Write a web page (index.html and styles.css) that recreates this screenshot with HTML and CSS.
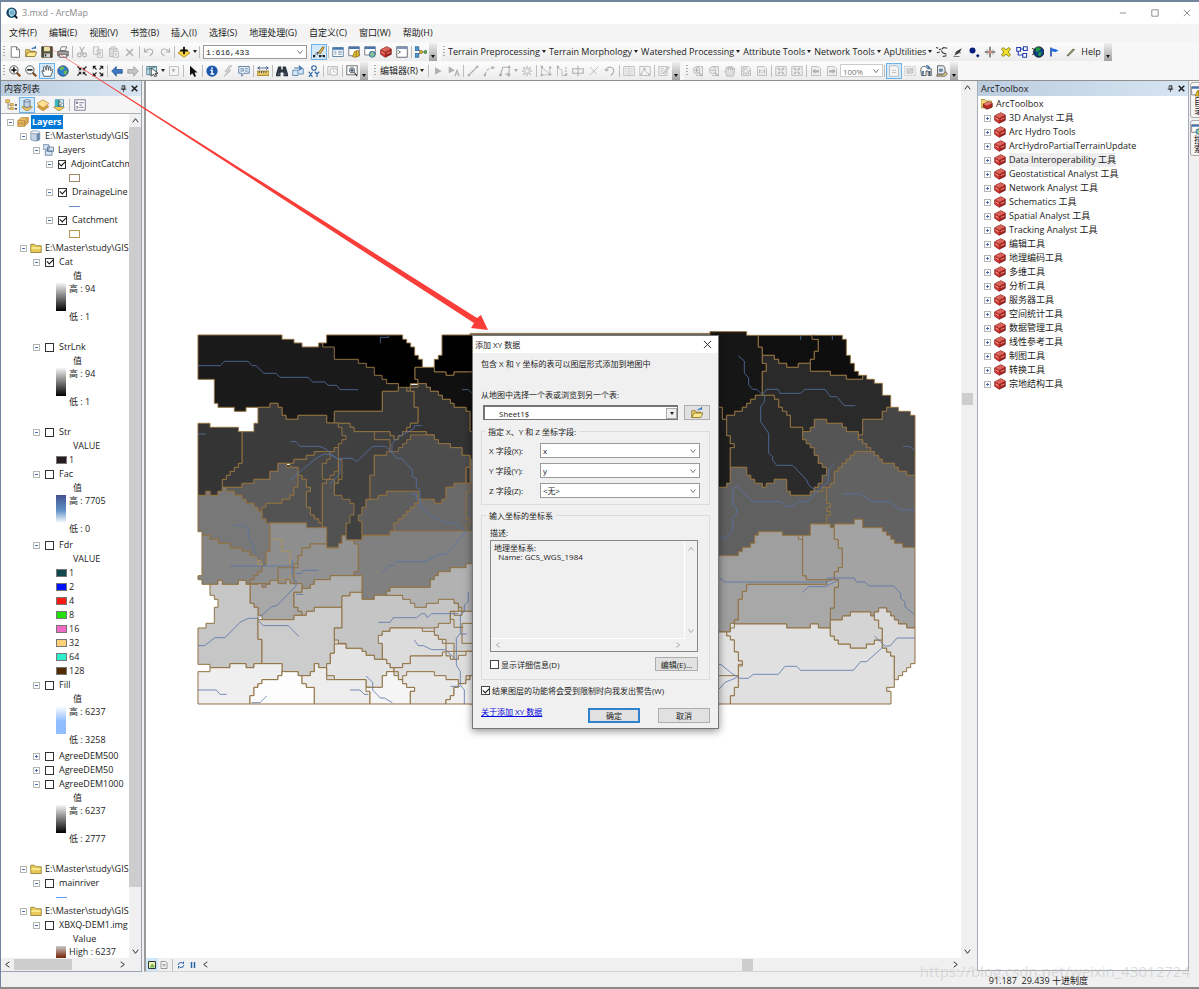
FILE: index.html
```html
<!DOCTYPE html>
<html lang="zh-CN">
<head>
<meta charset="utf-8">
<title>3.mxd - ArcMap</title>
<link rel="stylesheet" href="styles.css">
</head>
<body>
<svg class="defs" aria-hidden="true">
  <defs>
    <symbol id="app" viewBox="0 0 16 16"><circle cx="7.500" cy="7.500" r="7" fill="#173f63"/><path d="M3 4q4-4 8 0l-2 3-4-1zM4 9l4 1 1 4-3-1z" fill="#49b6b4"/><circle cx="8" cy="7.500" r="4" fill="#6fb0d2" stroke="#e4f2f8"/><path d="M11 11l4 4" stroke="#123" stroke-width="2.500"/></symbol>
    <symbol id="new" viewBox="0 0 16 16"><path d="M3 1h7l4 4v10H3z" fill="#fff" stroke="#555"/><path d="M10 1v4h4" fill="none" stroke="#555"/></symbol>
    <symbol id="open" viewBox="0 0 16 16"><path d="M1 14V5h5l1 2h6v2" fill="#f7d774" stroke="#7a6014"/><path d="M1 14l3-6h12l-3 6z" fill="#ffe892" stroke="#7a6014"/><path d="M9 4q3-3 5-1M14 0v3h-3" fill="none" stroke="#3876b8" stroke-width="1.500"/></symbol>
    <symbol id="save" viewBox="0 0 16 16"><path d="M1 1h14v14H1z" fill="#54513c" stroke="#2e2c20"/><path d="M4 1h8v6H4z" fill="#e9dfa7"/><path d="M4 10h8v5H4z" fill="#d6d6d6"/><path d="M5 11h2v3H5z" fill="#333"/></symbol>
    <symbol id="print" viewBox="0 0 16 16"><path d="M4 6l2-5h7l-2 5z" fill="#fff" stroke="#555"/><path d="M1 7h14v6H1z" fill="#a6a6a6" stroke="#444"/><path d="M3 11h10v4H3z" fill="#eee" stroke="#444"/></symbol>
    <symbol id="cut" viewBox="0 0 16 16"><path d="M5 1l5 10M11 1L6 10" fill="none" stroke="currentColor" stroke-width="1.500"/><circle cx="4.500" cy="12" r="2.500" fill="none" stroke="currentColor" stroke-width="1.500"/><circle cx="11.500" cy="12" r="2.500" fill="none" stroke="currentColor" stroke-width="1.500"/></symbol>
    <symbol id="copy" viewBox="0 0 16 16"><path d="M2 1h7v10H2zM7 5h7v10H7z" fill="#f2f2f2" stroke="currentColor"/><path d="M9 8h3M9 10h3M9 12h3" stroke="currentColor"/></symbol>
    <symbol id="paste" viewBox="0 0 16 16"><path d="M2 3h10v11H2z" fill="#ddd" stroke="currentColor"/><path d="M5 1h4v3H5zM7 7h7v8H7z" fill="#f4f4f4" stroke="currentColor"/><path d="M9 10h3M9 12h3" stroke="currentColor"/></symbol>
    <symbol id="cross" viewBox="0 0 16 16"><path d="M3 4l9 9M12 4l-9 9" fill="none" stroke="currentColor" stroke-width="2"/></symbol>
    <symbol id="undo" viewBox="0 0 16 16"><path d="M2 3v5h5M2 8q5-6 10-3 3 4-3 8" fill="none" stroke="currentColor" stroke-width="1.500"/></symbol>
    <symbol id="redo" viewBox="0 0 16 16"><path d="M14 3v5H9M14 8Q9 2 4 5q-3 4 3 8" fill="none" stroke="currentColor" stroke-width="1.500"/></symbol>
    <symbol id="add" viewBox="0 0 16 16"><path d="M0 9l8-5 8 5-8 6z" fill="#ffd83d" stroke="#a37e16"/><path d="M8 1v10M3 6h10" stroke="#111" stroke-width="2.500"/></symbol>
    <symbol id="editor" viewBox="0 0 16 16"><path d="M1 13l3-3 5 3h6" fill="none" stroke="#333" stroke-dasharray="2 1"/><path d="M0 12h3v3H0zM5 8h2v2H5zM8 12h3v3H8zM13 12h3v3h-3z" fill="#222"/><path d="M7 9l6-8 2 1-5 8z" fill="#e8bc49" stroke="#674d13"/></symbol>
    <symbol id="table" viewBox="0 0 16 16"><path d="M1 2h14v12H1z" fill="#fff" stroke="#41658c"/><path d="M1 2h14v3H1z" fill="#4476ad"/><path d="M3 7h3M3 9h3M3 11h3M8 7h5M8 9h5M8 11h5" stroke="#6a8fb6"/></symbol>
    <symbol id="catalog" viewBox="0 0 16 16"><path d="M1 1h14v12H1z" fill="#fff" stroke="#556"/><path d="M1 1h14v3H1z" fill="#4476ad"/><path d="M9 7l5-1 1 7-5 2-4-1z" fill="#e3c02c" stroke="#816915"/><path d="M11 7v7" stroke="#816915"/></symbol>
    <symbol id="search" viewBox="0 0 16 16"><path d="M1 1h14v11H1z" fill="#fff" stroke="#556"/><path d="M1 1h14v3H1z" fill="#4476ad"/><circle cx="11" cy="11" r="4" fill="#67a9d8" stroke="#2c6577"/><path d="M8 11h6M11 8v6" stroke="#9bd065" stroke-width="1.500"/></symbol>
    <symbol id="toolbox" viewBox="0 0 16 16"><path d="M1 5l8-4 6 3v7l-8 4-6-4z" fill="#a8241f" stroke="#63110e"/><path d="M1 5l8-4 6 3-8 4z" fill="#d8645c"/><path d="M1 6l6 3v6l-6-4z" fill="#ce3c35"/><path d="M2 8l4 2M9 10l5-2" stroke="#f1c0b8"/></symbol>
    <symbol id="toolroot" viewBox="0 0 16 16"><path d="M0 13V2h5l2 2h7v9z" fill="#f7d671" stroke="#967923"/><path d="M3 8l7-3 5 2v5l-7 3-5-3z" fill="#b52d27" stroke="#681713"/><path d="M3 8l7-3 5 2-7 3z" fill="#e37b72"/></symbol>
    <symbol id="python" viewBox="0 0 16 16"><path d="M1 1h14v14H1z" fill="#fff" stroke="#445"/><path d="M1 1h14v3H1z" fill="#7d95b5"/><path d="M3 6l3 2-3 2" fill="none" stroke="#333"/></symbol>
    <symbol id="model" viewBox="0 0 16 16"><path d="M4 4l4 4-4 4M8 8h5" fill="none" stroke="#556"/><path d="M0 1h5v5H0z" fill="#4b9ad2" stroke="#285c87"/><path d="M0 10h5v5H0z" fill="#4b9ad2" stroke="#285c87"/><circle cx="8" cy="8" r="2" fill="#edc34e" stroke="#806115"/><circle cx="14" cy="8" r="2" fill="#67b567" stroke="#296729"/></symbol>
    <symbol id="zin" viewBox="0 0 16 16"><path d="M10 10l5 5" stroke="#7b4a20" stroke-width="3"/><circle cx="6.500" cy="6.500" r="5.500" fill="#f4f8fa" stroke="#333"/><path d="M3 6.500h7M6.500 3v7" stroke="#111" stroke-width="2"/></symbol>
    <symbol id="zout" viewBox="0 0 16 16"><path d="M10 10l5 5" stroke="#7b4a20" stroke-width="3"/><circle cx="6.500" cy="6.500" r="5.500" fill="#f4f8fa" stroke="#333"/><path d="M3 6.500h7" stroke="#111" stroke-width="2"/></symbol>
    <symbol id="hand" viewBox="0 0 16 16"><path d="M4 15L1 8l2-1 1 2-1-6 2-1 2 5V1h2l1 6 1-5 2 1v5l2-2 1 1-3 8z" fill="#fff" stroke="#333"/></symbol>
    <symbol id="globe" viewBox="0 0 16 16"><circle cx="8" cy="8" r="7" fill="#2e7fcb" stroke="#243f64"/><path d="M3 4q5-4 7 0l-3 3-3-1zM9 8l5-1-2 6-3-1z" fill="#75b852"/></symbol>
    <symbol id="darkglobe" viewBox="0 0 16 16"><circle cx="9" cy="8" r="7" fill="#123e89" stroke="#111"/><path d="M5 3q5-3 7 1l-3 3-4 1zM9 8l4 0-2 6-3-2z" fill="#1f9a42"/><path d="M0 3l4 2M0 12l4-3" stroke="#111"/></symbol>
    <symbol id="fixin" viewBox="0 0 16 16"><path d="M2 2l4 4M14 2l-4 4M2 14l4-4M14 14l-4-4" stroke="#222" stroke-width="1.500"/><path d="M7 3v4H3zM9 3v4h4zM7 13V9H3zM9 13V9h4z" fill="#222"/></symbol>
    <symbol id="fixout" viewBox="0 0 16 16"><path d="M2 2l4 4M14 2l-4 4M2 14l4-4M14 14l-4-4" stroke="#222" stroke-width="1.500"/><path d="M1 1h5L1 6zM15 1h-5l5 5zM1 15h5l-5-5zM15 15h-5l5-5z" fill="#222"/></symbol>
    <symbol id="back" viewBox="0 0 16 16"><path d="M1 8l6-6v4h8v5H7v4z" fill="#3c78c6" stroke="#224c89"/></symbol>
    <symbol id="fwd" viewBox="0 0 16 16"><path d="M15 8L9 2v4H1v5h8v4z" fill="#c3c3c3" stroke="#999"/></symbol>
    <symbol id="selfeat" viewBox="0 0 16 16"><path d="M1 2h13v11H1z" fill="#bfe6e4" stroke="#3c6a83"/><path d="M1 6l13-4M5 2v11" stroke="#3c6a83"/><path d="M7 4v11l3-3 2 4 2-1-2-4h4z" fill="#fff" stroke="#222"/></symbol>
    <symbol id="clearsel" viewBox="0 0 16 16"><path d="M2 2h12v12H2z" fill="#f5f5f5" stroke="currentColor"/><path d="M5 5l5 1-3 4z" fill="currentColor"/></symbol>
    <symbol id="pointer" viewBox="0 0 16 16"><path d="M4 1v13l3-3 3 5 2-1-2-5h4z" fill="#111"/></symbol>
    <symbol id="info" viewBox="0 0 16 16"><circle cx="8" cy="8" r="7.500" fill="#1d56a8"/><path d="M8 3v2M6 7h2v5M6 12h5" fill="none" stroke="#fff" stroke-width="2"/></symbol>
    <symbol id="bolt" viewBox="0 0 16 16"><path d="M10 1L4 9h4l-5 6 9-8H8l5-6z" fill="#ddd" stroke="currentColor"/></symbol>
    <symbol id="popup" viewBox="0 0 16 16"><path d="M1 2h14v9H8l-3 4v-4H1z" fill="#e9f3fc" stroke="#396188"/><path d="M3 5h4v3H3M9 5h4M9 8h4" fill="none" stroke="#396188"/></symbol>
    <symbol id="measure" viewBox="0 0 16 16"><path d="M0 8h16v6H0z" fill="#efc95c" stroke="#937322"/><path d="M3 8v3M6 8v3M9 8v3M12 8v3M1 4h14M4 2L1 4l3 2M12 2l3 2-3 2" fill="none" stroke="#21477a"/></symbol>
    <symbol id="find" viewBox="0 0 16 16"><path d="M3 2h4v4h2V2h4l3 10v3h-6v-5H6v5H0v-3z" fill="#2c3540"/><path d="M2 12h3M11 12h3" stroke="#88a"/></symbol>
    <symbol id="route" viewBox="0 0 16 16"><path d="M1 7h7v7H1zM9 5h6v7H9" fill="#d6e8f8" stroke="#3b6fa8"/><path d="M3 4h8M9 1l4 3-4 3" fill="none" stroke="#3b6fa8" stroke-width="1.500"/></symbol>
    <symbol id="xy" viewBox="0 0 16 16"><circle cx="8" cy="4" r="3" fill="#fff" stroke="#2763a5" stroke-width="1.500"/><path d="M1 9l5 7M6 9l-5 7M9 9l3 3 3-3M12 12v4" fill="none" stroke="#2763a5" stroke-width="1.500"/></symbol>
    <symbol id="clock" viewBox="0 0 16 16"><path d="M1 2h13v11H1z" fill="#eee" stroke="currentColor"/><circle cx="9" cy="9" r="5" fill="#f8f8f8" stroke="currentColor"/><path d="M9 6v3l2 1" fill="none" stroke="currentColor"/></symbol>
    <symbol id="viewer" viewBox="0 0 16 16"><path d="M1 1h14v12H1z" fill="#fff" stroke="#444"/><circle cx="8" cy="7" r="3.500" fill="#d7ecff" stroke="#333"/><path d="M8 5v4M6 7h4M11 10l4 5" stroke="#333" stroke-width="1.500"/></symbol>
    <symbol id="play" viewBox="0 0 16 16"><path d="M4 3l9 5-9 5z" fill="currentColor"/></symbol>
    <symbol id="playa" viewBox="0 0 16 16"><path d="M1 2l8 5-8 4z" fill="currentColor"/><path d="M9 15l3-8 3 8M10 12h4" fill="none" stroke="currentColor" stroke-width="1.500"/></symbol>
    <symbol id="line" viewBox="0 0 16 16"><path d="M3 13L13 3" stroke="currentColor" stroke-width="1.500"/><path d="M1 12h3v3H1zM12 1h3v3h-3z" fill="currentColor"/></symbol>
    <symbol id="arc" viewBox="0 0 16 16"><path d="M3 13q1-8 9-9" fill="none" stroke="currentColor" stroke-dasharray="4 2" stroke-width="1.500"/><path d="M1 12h3v3H1zM11 2h4v3h-4z" fill="currentColor"/></symbol>
    <symbol id="trace" viewBox="0 0 16 16"><path d="M2 13l3-10h9l-1 9H8" fill="none" stroke="currentColor" stroke-width="1.500"/><path d="M0 12h4v3H0zM12 1h3v3h-3zM11 11h4v4h-4z" fill="currentColor"/></symbol>
    <symbol id="burst" viewBox="0 0 16 16"><path d="M8 1v5M8 10v5M1 8h5M10 8h5M3 3l3 3M10 10l3 3M13 3l-3 3M6 10l-3 3" stroke="currentColor" stroke-width="1.500"/></symbol>
    <symbol id="verts" viewBox="0 0 16 16"><path d="M2 3l11 9V5M2 3v10h11" fill="none" stroke="currentColor"/><path d="M1 1h3v3H1zM1 12h3v3H1zM12 11h3v3h-3zM12 2h3v3h-3z" fill="currentColor"/></symbol>
    <symbol id="reshape" viewBox="0 0 16 16"><path d="M2 14V3l6 4v7M8 14h6" fill="none" stroke="currentColor"/><path d="M1 1h3v3H1zM12 3h2v2h-2zM12 7h2v2h-2zM12 11h3v3h-3z" fill="currentColor"/></symbol>
    <symbol id="split" viewBox="0 0 16 16"><path d="M1 5h14v6H1zM8 1v14" fill="none" stroke="currentColor" stroke-width="1.500"/></symbol>
    <symbol id="splitline" viewBox="0 0 16 16"><path d="M2 14L14 2M3 3l8 9" stroke="currentColor"/></symbol>
    <symbol id="rotate" viewBox="0 0 16 16"><path d="M3 8q0-6 6-5 6 2 3 8l-3 3M3 8l3-2M3 8L1 5" fill="none" stroke="currentColor" stroke-width="1.500"/></symbol>
    <symbol id="attr" viewBox="0 0 16 16"><path d="M1 2h14v12H1zM8 2v12M3 5h3M3 8h3M3 11h3M10 5h3M10 8h3M10 11h3" fill="#f4f4f4" stroke="currentColor"/></symbol>
    <symbol id="sketch" viewBox="0 0 16 16"><path d="M1 2h14v12H1z" fill="#f4f4f4" stroke="currentColor"/><path d="M3 12l4-7 2 4 4 3" fill="none" stroke="currentColor"/><path d="M6 4h3v2H6zM2 11h2v2H2zM12 11h2v2h-2z" fill="currentColor"/></symbol>
    <symbol id="template" viewBox="0 0 16 16"><path d="M1 2h11v12H1zM3 5h5M3 8h4M3 11h4" fill="#f4f4f4" stroke="currentColor"/><path d="M7 11l6-9 2 1-6 9z" fill="#ddd" stroke="currentColor"/></symbol>
    <symbol id="pzin" viewBox="0 0 16 16"><path d="M6 2h8v12H5" fill="#eee" stroke="currentColor"/><circle cx="6" cy="7" r="4.500" fill="#eee" stroke="currentColor"/><path d="M3 7h6M6 4v6M9 10l5 5" stroke="currentColor" stroke-width="1.500"/></symbol>
    <symbol id="pzout" viewBox="0 0 16 16"><path d="M6 2h8v12H5" fill="#eee" stroke="currentColor"/><circle cx="6" cy="7" r="4.500" fill="#eee" stroke="currentColor"/><path d="M3 7h6M9 10l5 5" stroke="currentColor" stroke-width="1.500"/></symbol>
    <symbol id="phand" viewBox="0 0 16 16"><path d="M4 15L1 8l2-1V3h2l1 3V2h2l1 4V2h2v5l1-3h2v5l-2 6z" fill="#ddd" stroke="currentColor"/></symbol>
    <symbol id="page" viewBox="0 0 16 16"><path d="M2 2h9l3 3v9H2z" fill="#eee" stroke="currentColor"/><path d="M8 3v3M8 10v3M3 8h3M10 8h3M4 4l2 2M12 12l-2-2M4 12l2-2" stroke="currentColor" stroke-width="1.500"/></symbol>
    <symbol id="pgrid" viewBox="0 0 16 16"><path d="M1 2h14v12H1z" fill="#eee" stroke="currentColor"/><path d="M4 4l3 3M12 4L9 7M4 12l3-3M12 12L9 9" stroke="currentColor" stroke-width="2"/></symbol>
    <symbol id="one" viewBox="0 0 16 16"><path d="M2 2h9l3 3v9H2z" fill="#eee" stroke="currentColor"/><path d="M5 6v5M11 6v5M8 7v1M8 10v1" stroke="currentColor" stroke-width="1.500"/></symbol>
    <symbol id="pback" viewBox="0 0 16 16"><path d="M2 2h9l3 3v9H2z" fill="#eee" stroke="currentColor"/><path d="M3 8l4-3v2h5v3H7v2z" fill="currentColor"/></symbol>
    <symbol id="pfwd" viewBox="0 0 16 16"><path d="M2 2h9l3 3v9H2z" fill="#eee" stroke="currentColor"/><path d="M13 8L9 5v2H4v3h5v2z" fill="currentColor"/></symbol>
    <symbol id="doc" viewBox="0 0 16 16"><path d="M2 1h9l3 3v11H2z" fill="#f6f6f6" stroke="currentColor"/><path d="M5 7h6M5 10h6" stroke="currentColor"/></symbol>
    <symbol id="focus" viewBox="0 0 16 16"><path d="M1 2h14v12H1z" fill="#f6f6f6" stroke="currentColor" stroke-dasharray="2 1"/><path d="M4 5h8v6H4zM4 11l8-6" fill="#ddd" stroke="currentColor"/></symbol>
    <symbol id="frames" viewBox="0 0 16 16"><path d="M1 6q1-5 6-4l3 3h5v9h-4V8H8v6H2z" fill="#fff" stroke="#333"/><path d="M8 1q4-1 5 3l-2 1" fill="#4a91cd" stroke="#245887"/><path d="M4 8v5M13 8v5" stroke="#245887" stroke-width="2"/></symbol>
    <symbol id="driven" viewBox="0 0 16 16"><path d="M2 1h8l2 3v8H2z" fill="#e4e8ef" stroke="#444"/><path d="M4 5h5v4H4z" fill="#689"/><path d="M1 13h8l4-4 2 3-3 3H1z" fill="#dbc67c" stroke="#555"/></symbol>
    <symbol id="trace2" viewBox="0 0 16 16"><path d="M0 2l3 1M4 5l3-1M8 4l2-2 5 1M7 6l2 3 5 2M9 14l5-1M1 9l4-1" fill="none" stroke="#333" stroke-width="1.500"/></symbol>
    <symbol id="pen2" viewBox="0 0 16 16"><path d="M3 13l3-6 7-4-3 6z" fill="#333"/><path d="M2 14h8M4 9h8" stroke="#555"/></symbol>
    <symbol id="dots" viewBox="0 0 16 16"><circle cx="6" cy="6" r="4" fill="#0a1e7d"/><path d="M11 13h4M13 11v4" stroke="#0a1e7d" stroke-width="2"/></symbol>
    <symbol id="plusgrid" viewBox="0 0 16 16"><path d="M8 1v14M1 8h14" stroke="#666" stroke-width="2"/><path d="M6 6h4v4H6z" fill="#d58b7d"/><path d="M4 4v8M12 4v8" stroke="#999"/></symbol>
    <symbol id="yellowx" viewBox="0 0 16 16"><path d="M2 4l2-2 4 3 4-3 2 2-3 4 3 4-2 2-4-3-4 3-2-2 3-4z" fill="#f1df25" stroke="#716a0b"/></symbol>
    <symbol id="network" viewBox="0 0 16 16"><path d="M1 2h5v5H1zM10 1h5v5h-5zM9 10h5v5H9zM6 4h4M3 7v5h6" fill="#fff" stroke="#263fae" stroke-width="1.500"/></symbol>
    <symbol id="flag" viewBox="0 0 16 16"><path d="M4 2v12" stroke="#123d9c" stroke-width="2"/><path d="M5 3l4 1 5 2-4 2-5-1z" fill="#1766df"/></symbol>
    <symbol id="pencil" viewBox="0 0 16 16"><path d="M4 13L12 4l2 1-8 8z" fill="#a2c46b" stroke="#444"/></symbol>
    <symbol id="chev" viewBox="0 0 10 10"><path d="M2 3l3 4 3-4" fill="none" stroke="currentColor"/></symbol>
    <symbol id="pin" viewBox="0 0 10 10"><path d="M3 1h4v5H3zM1 6h8M5 6v4M6 1v5" fill="none" stroke="currentColor"/></symbol>
    <symbol id="close" viewBox="0 0 10 10"><path d="M1 1l8 8M9 1L1 9" stroke="currentColor"/></symbol>
    <symbol id="boldclose" viewBox="0 0 10 10"><path d="M1 1l8 8M9 1L1 9" stroke="currentColor" stroke-width="2"/></symbol>
    <symbol id="layers" viewBox="0 0 16 16"><path d="M1 6l5-4h9v7l-5 5H1z" fill="#e9bb63" stroke="#b58a45"/><path d="M1 6h9l5-4M10 6v8M1 9h9l5-4M1 11h9l5-4" fill="none" stroke="#b58a45"/></symbol>
    <symbol id="db" viewBox="0 0 16 16"><path d="M1 3v10q7 4 12 0V3z" fill="#c3d2e2" stroke="#8093a8"/><ellipse cx="7" cy="3" rx="6" ry="2" fill="#f0f6fc" stroke="#8093a8"/><path d="M9 5v10l4-2V4z" fill="#6c89a9"/></symbol>
    <symbol id="dataset" viewBox="0 0 16 16"><path d="M0 1h8v6H0zM6 4h8v6H6zM3 9h9v6H3z" fill="#d5e5f4" stroke="#547091"/></symbol>
    <symbol id="folder" viewBox="0 0 16 16"><path d="M1 14V3h5l2 2h7v9z" fill="#e8ca58" stroke="#887023"/><path d="M2 8h12" stroke="#fff0a0" stroke-width="2"/></symbol>
    <symbol id="listdraw" viewBox="0 0 16 16"><path d="M4 4v9h4M4 8h4" fill="none" stroke="#777"/><path d="M1 1h5v4H1zM7 6h4v3H7zM7 11h4v3H7z" fill="#f0c75d" stroke="#b9924a"/><path d="M13 8h3M13 13h3" stroke="#444" stroke-width="2"/></symbol>
    <symbol id="listsrc" viewBox="0 0 16 16"><path d="M1 11l7-3 7 3-7 5z" fill="#efca5b" stroke="#9b7829"/><path d="M4 2v8q4 3 8 0V2z" fill="#c4d2e2" stroke="#415a78"/><ellipse cx="8" cy="2.500" rx="4" ry="1.500" fill="#fff" stroke="#415a78"/></symbol>
    <symbol id="listvis" viewBox="0 0 16 16"><path d="M0 10l8-4 8 4-8 6z" fill="#d69d3a" stroke="#b58a45"/><path d="M0 6l8-5 8 5-8 6z" fill="#ffe291" stroke="#b58a45"/></symbol>
    <symbol id="listsel" viewBox="0 0 16 16"><path d="M1 11l7-4 7 4-7 5z" fill="#efca5b" stroke="#9b7829"/><path d="M3 1h11v9H3z" fill="#dff5ff" stroke="#387895"/><path d="M3 1h5v9H3z" fill="#38b7bc"/><path d="M8 2v8l4-4z" fill="#fff" stroke="#222"/></symbol>
    <symbol id="options" viewBox="0 0 16 16"><path d="M1 1h14v14H1z" fill="#fff" stroke="#557"/><path d="M3 4h2v2H3zM3 10h2v2H3M7 5h6M7 8h4M7 11h6" fill="none" stroke="#557"/></symbol>
    <symbol id="dataview" viewBox="0 0 16 16"><path d="M1 1h14v14H1z" fill="#e9f3b4" stroke="#333" stroke-width="2"/><path d="M3 13l5-8 5 5v3z" fill="#7fb661"/></symbol>
    <symbol id="refresh" viewBox="0 0 16 16"><path d="M2 8q1-6 8-5l3 3V1M14 8q-1 6-8 5l-3-3v5" fill="none" stroke="#2864a9" stroke-width="2"/></symbol>
  </defs>
</svg>

<div class="app">
  <header class="titlebar">
    <svg class="app-icon"><use href="#app"/></svg>
    <span class="app-title">3.mxd - ArcMap</span>
    <button class="win" aria-label="最小化"><svg viewBox="0 0 10 10"><path d="M1 5h8" stroke="currentColor"/></svg></button>
    <button class="win" aria-label="最大化"><svg viewBox="0 0 10 10"><path d="M1 1h8v8H1z" fill="none" stroke="currentColor"/></svg></button>
    <button class="win" aria-label="关闭"><svg><use href="#close"/></svg></button>
  </header>

  <nav class="menubar">
    <button>文件(F)</button><button>编辑(E)</button><button>视图(V)</button><button>书签(B)</button><button>插入(I)</button><button>选择(S)</button><button>地理处理(G)</button><button>自定义(C)</button><button>窗口(W)</button><button>帮助(H)</button>
  </nav>

  <div class="bars">
    <div class="bar">
      <i class="grip"></i>
      <button class="tb" aria-label="新建"><svg><use href="#new"/></svg></button>
      <button class="tb" aria-label="打开"><svg><use href="#open"/></svg></button>
      <button class="tb" aria-label="保存"><svg><use href="#save"/></svg></button>
      <button class="tb" aria-label="打印"><svg><use href="#print"/></svg></button>
      <i class="sep"></i>
      <button class="tb off" aria-label="剪切"><svg><use href="#cut"/></svg></button>
      <button class="tb off" aria-label="复制"><svg><use href="#copy"/></svg></button>
      <button class="tb off" aria-label="粘贴"><svg><use href="#paste"/></svg></button>
      <button class="tb off" aria-label="删除"><svg><use href="#cross"/></svg></button>
      <i class="sep"></i>
      <button class="tb off" aria-label="撤消"><svg><use href="#undo"/></svg></button>
      <button class="tb off" aria-label="恢复"><svg><use href="#redo"/></svg></button>
      <i class="sep"></i>
      <button class="tb" aria-label="添加数据"><svg><use href="#add"/></svg></button><i class="caret"></i>
      <i class="sep"></i>
      <span class="combo scale"><select aria-label="地图比例"><option>1:616,433</option></select><svg><use href="#chev"/></svg></span>
      <button class="tb on" aria-label="编辑器工具条"><svg><use href="#editor"/></svg></button>
      <i class="sep"></i>
      <button class="tb" aria-label="内容列表"><svg><use href="#table"/></svg></button>
      <button class="tb" aria-label="目录"><svg><use href="#catalog"/></svg></button>
      <button class="tb" aria-label="搜索"><svg><use href="#search"/></svg></button>
      <button class="tb" aria-label="ArcToolbox"><svg><use href="#toolbox"/></svg></button>
      <button class="tb" aria-label="Python"><svg><use href="#python"/></svg></button>
      <i class="sep"></i>
      <button class="tb" aria-label="模型构建器"><svg><use href="#model"/></svg></button>
      <i class="more"></i>
    </div>
    <div class="bar hydro">
      <i class="grip"></i>
      <button class="drop">Terrain Preprocessing<i class="caret"></i></button>
      <button class="drop">Terrain Morphology<i class="caret"></i></button>
      <button class="drop">Watershed Processing<i class="caret"></i></button>
      <button class="drop">Attribute Tools<i class="caret"></i></button>
      <button class="drop">Network Tools<i class="caret"></i></button>
      <button class="drop">ApUtilities<i class="caret"></i></button>
      <button class="tb" aria-label="Flow path"><svg><use href="#trace2"/></svg></button>
      <button class="tb" aria-label="Trace"><svg><use href="#pen2"/></svg></button>
      <button class="tb" aria-label="Point delineation"><svg><use href="#dots"/></svg></button>
      <button class="tb" aria-label="Batch point"><svg><use href="#plusgrid"/></svg></button>
      <button class="tb" aria-label="Assign"><svg><use href="#yellowx"/></svg></button>
      <button class="tb" aria-label="Network"><svg><use href="#network"/></svg></button>
      <button class="tb" aria-label="Global"><svg><use href="#darkglobe"/></svg></button>
      <button class="tb" aria-label="Flag"><svg><use href="#flag"/></svg></button>
      <button class="tb" aria-label="Draw"><svg><use href="#pencil"/></svg></button>
      <button class="drop help">Help</button>
      <i class="more"></i>
    </div>
  </div>

  <div class="bars second">
    <div class="bar">
      <i class="grip"></i>
      <button class="tb" aria-label="放大"><svg><use href="#zin"/></svg></button>
      <button class="tb" aria-label="缩小"><svg><use href="#zout"/></svg></button>
      <button class="tb on" aria-label="平移"><svg><use href="#hand"/></svg></button>
      <button class="tb" aria-label="全图"><svg><use href="#globe"/></svg></button>
      <i class="sep clear"></i>
      <button class="tb" aria-label="固定比例放大"><svg><use href="#fixin"/></svg></button>
      <button class="tb" aria-label="固定比例缩小"><svg><use href="#fixout"/></svg></button>
      <i class="sep"></i>
      <button class="tb" aria-label="后退"><svg><use href="#back"/></svg></button>
      <button class="tb" aria-label="前进"><svg><use href="#fwd"/></svg></button>
      <i class="sep"></i>
      <button class="tb" aria-label="选择要素"><svg><use href="#selfeat"/></svg></button><i class="caret"></i>
      <button class="tb off" aria-label="清除选择"><svg><use href="#clearsel"/></svg></button>
      <i class="sep"></i>
      <button class="tb" aria-label="选择元素"><svg><use href="#pointer"/></svg></button>
      <i class="sep"></i>
      <button class="tb" aria-label="识别"><svg><use href="#info"/></svg></button>
      <button class="tb off" aria-label="超链接"><svg><use href="#bolt"/></svg></button>
      <button class="tb" aria-label="弹出窗口"><svg><use href="#popup"/></svg></button>
      <i class="sep"></i>
      <button class="tb" aria-label="测量"><svg><use href="#measure"/></svg></button>
      <i class="sep"></i>
      <button class="tb" aria-label="查找"><svg><use href="#find"/></svg></button>
      <button class="tb" aria-label="查找路径"><svg><use href="#route"/></svg></button>
      <button class="tb" aria-label="转到 XY"><svg><use href="#xy"/></svg></button>
      <i class="sep"></i>
      <button class="tb off" aria-label="时间滑块"><svg><use href="#clock"/></svg></button>
      <i class="sep"></i>
      <button class="tb" aria-label="查看器窗口"><svg><use href="#viewer"/></svg></button>
      <i class="more"></i>
    </div>
    <div class="bar">
      <i class="grip"></i>
      <button class="drop edit-menu">编辑器(R)<i class="caret"></i></button>
      <i class="sep"></i>
      <button class="tb off" aria-label="编辑工具"><svg><use href="#play"/></svg></button>
      <button class="tb off" aria-label="编辑注记"><svg><use href="#playa"/></svg></button>
      <i class="sep"></i>
      <button class="tb off" aria-label="直线段"><svg><use href="#line"/></svg></button>
      <button class="tb off" aria-label="弧段"><svg><use href="#arc"/></svg></button>
      <button class="tb off" aria-label="追踪"><svg><use href="#trace"/></svg></button><i class="caret dim"></i>
      <button class="tb off" aria-label="点"><svg><use href="#burst"/></svg></button>
      <i class="sep"></i>
      <button class="tb off" aria-label="编辑折点"><svg><use href="#verts"/></svg></button>
      <button class="tb off" aria-label="整形"><svg><use href="#reshape"/></svg></button>
      <button class="tb off" aria-label="裁剪面"><svg><use href="#split"/></svg></button>
      <button class="tb off" aria-label="分割"><svg><use href="#splitline"/></svg></button>
      <button class="tb off" aria-label="旋转"><svg><use href="#rotate"/></svg></button>
      <i class="sep"></i>
      <button class="tb off" aria-label="属性"><svg><use href="#attr"/></svg></button>
      <button class="tb off" aria-label="草图属性"><svg><use href="#sketch"/></svg></button>
      <i class="sep"></i>
      <button class="tb off" aria-label="创建要素"><svg><use href="#template"/></svg></button>
      <i class="more"></i>
    </div>
    <div class="bar layout">
      <i class="grip"></i>
      <button class="tb off" aria-label="布局放大"><svg><use href="#pzin"/></svg></button>
      <button class="tb off" aria-label="布局缩小"><svg><use href="#pzout"/></svg></button>
      <button class="tb off" aria-label="布局平移"><svg><use href="#phand"/></svg></button>
      <button class="tb off" aria-label="缩放整个页面"><svg><use href="#page"/></svg></button>
      <button class="tb off" aria-label="缩放至 100%"><svg><use href="#one"/></svg></button>
      <i class="sep"></i>
      <button class="tb off" aria-label="布局固定放大"><svg><use href="#pgrid"/></svg></button>
      <button class="tb off" aria-label="布局固定缩小"><svg><use href="#pgrid"/></svg></button>
      <i class="sep"></i>
      <button class="tb off" aria-label="上一范围"><svg><use href="#pback"/></svg></button>
      <button class="tb off" aria-label="下一范围"><svg><use href="#pfwd"/></svg></button>
      <span class="combo percent"><select aria-label="布局比例"><option>100%</option></select><svg><use href="#chev"/></svg></span>
      <i class="sep"></i>
      <button class="tb off on" aria-label="切换描绘模式"><svg><use href="#doc"/></svg></button>
      <button class="tb off" aria-label="焦点数据框"><svg><use href="#focus"/></svg></button>
      <button class="tb" aria-label="更改布局"><svg><use href="#frames"/></svg></button>
      <button class="tb" aria-label="数据驱动页面"><svg><use href="#driven"/></svg></button>
      <i class="more"></i>
    </div>
  </div>

  <main class="work">
    <aside class="toc">
      <div class="panel-title"><span>内容列表</span><button aria-label="自动隐藏"><svg><use href="#pin"/></svg></button><button aria-label="关闭面板"><svg><use href="#boldclose"/></svg></button></div>
      <div class="toc-tools">
        <button class="tb" aria-label="按绘制顺序"><svg><use href="#listdraw"/></svg></button>
        <button class="tb on" aria-label="按源"><svg><use href="#listsrc"/></svg></button>
        <button class="tb" aria-label="按可见性"><svg><use href="#listvis"/></svg></button>
        <button class="tb" aria-label="按选择"><svg><use href="#listsel"/></svg></button>
        <i class="sep"></i>
        <button class="tb" aria-label="选项"><svg><use href="#options"/></svg></button>
      </div>
      <div class="toc-body">
        <div class="tree">
          <div class="row"><i class="tog"></i><svg><use href="#layers"/></svg><b class="picked">Layers</b></div>
          <div class="row l1"><i class="tog"></i><svg><use href="#db"/></svg><span>E:\Master\study\GIS</span></div>
          <div class="row l2"><i class="tog"></i><svg><use href="#dataset"/></svg><span>Layers</span></div>
          <label class="row l3"><i class="tog"></i><input type="checkbox" checked><span>AdjointCatchment</span></label>
          <div class="row sym"><i class="poly"></i></div>
          <label class="row l3"><i class="tog"></i><input type="checkbox" checked><span>DrainageLine</span></label>
          <div class="row sym"><i class="stroke"></i></div>
          <label class="row l3"><i class="tog"></i><input type="checkbox" checked><span>Catchment</span></label>
          <div class="row sym"><i class="poly gold"></i></div>
          <div class="row l1"><i class="tog"></i><svg><use href="#folder"/></svg><span>E:\Master\study\GIS</span></div>
          <label class="row l2"><i class="tog"></i><input type="checkbox" checked><span>Cat</span></label>
          <div class="ramp tall"><span class="head">值</span><i class="gray"></i><span>高 : 94</span><span>低 : 1</span></div>
          <label class="row l2"><i class="tog"></i><input type="checkbox"><span>StrLnk</span></label>
          <div class="ramp tall"><span class="head">值</span><i class="gray"></i><span>高 : 94</span><span>低 : 1</span></div>
          <label class="row l2"><i class="tog"></i><input type="checkbox"><span>Str</span></label>
          <div class="row val">VALUE</div>
          <div class="row cls"><i class="c-str"></i>1</div>
          <label class="row l2"><i class="tog"></i><input type="checkbox"><span>Fac</span></label>
          <div class="ramp"><span class="head">值</span><i class="navy"></i><span>高 : 7705</span><span>低 : 0</span></div>
          <label class="row l2"><i class="tog"></i><input type="checkbox"><span>Fdr</span></label>
          <div class="row val">VALUE</div>
          <div class="row cls"><i class="c1"></i>1</div>
          <div class="row cls"><i class="c2"></i>2</div>
          <div class="row cls"><i class="c4"></i>4</div>
          <div class="row cls"><i class="c8"></i>8</div>
          <div class="row cls"><i class="c16"></i>16</div>
          <div class="row cls"><i class="c32"></i>32</div>
          <div class="row cls"><i class="c64"></i>64</div>
          <div class="row cls"><i class="c128"></i>128</div>
          <label class="row l2"><i class="tog"></i><input type="checkbox"><span>Fill</span></label>
          <div class="ramp"><span class="head">值</span><i class="sky"></i><span>高 : 6237</span><span>低 : 3258</span></div>
          <label class="row l2"><i class="tog plus"></i><input type="checkbox"><span>AgreeDEM500</span></label>
          <label class="row l2"><i class="tog plus"></i><input type="checkbox"><span>AgreeDEM50</span></label>
          <label class="row l2"><i class="tog"></i><input type="checkbox"><span>AgreeDEM1000</span></label>
          <div class="ramp tall"><span class="head">值</span><i class="gray"></i><span>高 : 6237</span><span>低 : 2777</span></div>
          <div class="row l1"><i class="tog"></i><svg><use href="#folder"/></svg><span>E:\Master\study\GIS</span></div>
          <label class="row l2"><i class="tog"></i><input type="checkbox"><span>mainriver</span></label>
          <div class="row cls"><i class="river"></i></div>
          <div class="row l1"><i class="tog"></i><svg><use href="#folder"/></svg><span>E:\Master\study\GIS</span></div>
          <label class="row l2"><i class="tog"></i><input type="checkbox"><span>XBXQ-DEM1.img</span></label>
          <div class="ramp last"><span class="head">Value</span><i class="earth"></i><span>High : 6237</span></div>
        </div>
        <div class="vbar"><svg class="up"><use href="#chev"/></svg><i class="toc-thumb"></i><svg><use href="#chev"/></svg></div>
      </div>
      <div class="hbar"><svg class="left"><use href="#chev"/></svg><i class="toc-hthumb"></i><i class="fill"></i><svg class="right"><use href="#chev"/></svg><i class="corner"></i></div>
    </aside>

    <section class="mapview">
      <div class="mapmain">
        <svg class="map" viewBox="0 0 815 877" role="img" aria-label="集水区地图">
          <g transform="translate(44 244) scale(.33333)">
            <path fill="#3a3a3a" d="M610 180H690V400H300V420H900V640H300V500H230V420H300V340H610z"/>
            <path fill="#909090" d="M190 600H900V800H190z"/>
            <path fill="#d8d8d8" d="M220 800H900V1100H290V1000H220z"/>
            <path fill="#2a2a2a" d="M1630 200H2000V400H1630z"/>
            <path fill="#9f9f9f" d="M1700 600H2100V850H1700z"/>
            <path fill="#dedede" d="M1570 850H2100V1100H1570z"/>
          </g>
          <g transform="translate(44 244) scale(.33333)" stroke="#917040" stroke-width="3">
            <path fill="#777" d="M840 26H1590V1137H840z"/>
            <path fill="#000" d="M398 54H410V30H638V43H650V54H662V66H674V91H685V103H697V127H675V163H684V176H661V187H650V199H625V176H398Z"/>
            <path fill="#1a1a1a" d="M24 30H276V43H312V54H336V66H386V54H398V66H433V103H505V115H529V127H553V151H576V163H590V176H625V199H577V259H433V294H410V271H324V283H288V271H276V247H264V235H240V247H168V259H133V247H84V235H73V163H24Z"/>
            <path fill="#000" d="M756 30H900V141H792V151H768V141H733V103H745V91H756Z"/>
            <path fill="#101010" d="M675 127H733V141H768V151H792V141H900V320H840V259H828V247H792V235H781V223H757V211H745V199H721V187H709V176H684V163H675Z"/>
            <path fill="#333" d="M661 187H684V176H709V187H721V199H745V211H757V223H781V235H792V247H828V259H840V320H900V403H840V391H816V368H781V356H745V344H733V330H709V320H650V307H661V294H684V247H672V199H661Z"/>
            <path fill="#373737" d="M577 199H625V187H650V199H661H672V247H684V294H661V307H650V320H638V332H625V344H612V332H600V320H492V307H480V295H433V259H577Z"/>
            <path fill="#404040" d="M445 295H480V307H492V320H600V332H612V344H625V332H638V320H709V330H733V391H553V451H540V523H528V547H516V645H468V594H433V295Z"/>
            <path fill="#3b3b3b" d="M204 247H240V235H264V247H276V271H288V283H324V271H410V294H445V307H456V332H468V344H456V356H445V368H433V380H373V391H349V403H312V415H264V439H240V463H192V475H156V487H97V463H109V451H120V439H133V427H145V415H156V320H192V295H204Z"/>
            <path fill="#343434" d="M24 295H60V307H145V320H156V415H145V427H133V439H120V451H109V463H97V499H84V511H60V499H48V511H24Z"/>
            <path fill="#4d4d4d" d="M553 391H590V380H625V368H638V356H650V344H662V330H733V344H745V356H781V368H816V391H840V427H828V475H792V487H768V523H756V535H733V523H685V499H590V511H565V523H540V451H553Z"/>
            <path fill="#5e5e5e" d="M528 523H565V511H590V499H685V535H674V547H661V559H650V570H638V582H625V594H612V630H516V588H505V570H516V547H528Z"/>
            <path fill="#696969" d="M685 523H733V535H756V523H768V487H792V475H900V620H612V594H625V582H638V570H650V559H661V547H674V535H685Z"/>
            <path fill="#474747" d="M300 427V415H312V403H349V391H373V380H433V368H445V475H397V594H386V582H373V570H361V547H349V499H361V487H349V463H336V451H324V427Z"/>
            <path fill="#515151" d="M397 475H410V463H433V511H456V523H480V535H492V570H480V594H468V632H456V667H410V618H397Z"/>
            <path fill="none" d="M420 380V403H410V415H397V463H420V451H433V439H445V403H456V463H445V475H433V511M553 320V344H600V380"/>
            <path fill="#5c5c5c" d="M264 415H290V427H324V487H312V511H300V523H276V535H228V547H216V559H204V547H192V535H168V523H156V511H133V499H109V487H156V475H192V463H240V439H264Z"/>
            <path fill="#535353" d="M324 451H336V463H349V487H361V499H349V547H361V570H373V582H386V594H397V606H410V618H349V594H240V606H228V582H216V547H228V535H276V523H300V511H312V487H324Z"/>
            <path fill="#787878" d="M24 511H48V499H60V511H84V499H97V487H109V499H133V511H156V523H168V535H192V547H204V559H216V582H228V594H240V680H228V720H216V706H204V694H180V680H156V669H120V655H85V643H60V631H36V620H24Z"/>
            <path fill="#858585" d="M36 631H60V643H85V655H120V669H156V680H180V692H204V704H216V740H204V752H192V764H180V778H168V766H145V778H97V766H84V778H36V764H24V752H36Z"/>
            <path fill="#8e8e8e" d="M240 594H349V608H410V657H361V669H336V692H324V716H312V728H264V776H180V764H192V752H204V740H216V720H228V680H240Z"/>
            <path fill="none" stroke="#b0935f" d="M240 643H276V680H300V728M204 706H216V720H204ZM264 764H300V752H312"/>
            <path fill="#929292" d="M361 657H410V669H445V655H456V632H468V645H505V752H421V764H373V778H361V790H336V778H312V728H324V692H336V669H361Z"/>
            <path fill="#808080" d="M516 632H600V618H900V716H828V728H781V740H745V752H733V764H721V787H600V799H590V811H553V823H516V752H492V740H505V657H492V645H516Z"/>
            <path fill="#a8a8a8" d="M180 778H204V776H216V787H228V778H240V766H264V776H288V764H300V776H336V802H312V847H324V859H336V871H312V884H216V871H204V847H192V835H180Z"/>
            <path fill="#b0b0b0" d="M336 790V802H312V847H324V859H336V871H349V859H373V847H456V813H480V802H516V752H421V764H373V778H361V790Z"/>
            <path fill="#c6c6c6" d="M60 778H84V766H97V778H145V766H168V778H180V835H192V847H204V943H216V1016H192V1028H168V1016H120V1028H60V1018H24V909H48V895H73V847H84V823H73V811H60Z"/>
            <path fill="#ccc" d="M204 884H312V871H349V859H373V847H456V909H433V985H421V1016H410V1028H386V1016H373V1040H361V1052H324V1040H276V1016H216V943H204Z"/>
            <path fill="#c5c5c5" d="M456 813H480V802H516V823H553V811H900V909H600V919H577V1003H553V991H528V979H516V970H468V955H445V945H433V909H456Z"/>
            <path fill="#b2b2b2" d="M590 811V799H600V787H721V764H733V752H745V740H781V728H828V716H900V859H805V835H792V823H745V835H709V847H674V835H661V823H638V811Z"/>
            <path fill="#cfcfcf" d="M781 859H900V979H792V955H768V943H745V931H733V907H745V895H781Z"/>
            <path fill="none" d="M792 835H805V847H816V871H792V859H781V883H792V907H820M847 895H816V955H847"/>
            <path fill="#dcdcdc" d="M600 909H697V919H733V931H745V943H757V955H768V979H792V1003H781V993H661V1016H638V1028H600V1016H590V1003H577V955H565V931H577V919H600Z"/>
            <path fill="#e3e3e3" d="M433 957H468V970H516V979H528V991H553V1003H590V1016H600V1028H612V1040H590V1052H577V1087H528V1064H433V1052H410V1016H421V985H433Z"/>
            <path fill="#dedede" d="M661 993H757V981H768V993H781V1003H805V991H828V979H900V1052H828V1076H805V1064H625V1040H612V1028H638V1016H661Z"/>
            <path fill="#efefef" d="M60 1028H120V1016H168V1028H192V1016H276V1052H264V1064H216V1076H204V1087H192V1112H180V1137H24V1040H60Z"/>
            <path fill="#fdfdfd" d="M276 1040H324V1052H336V1076H349V1087H373V1137H180V1112H192V1087H204V1076H216V1064H264V1052H276Z"/>
            <path fill="#ededed" d="M386 1016V1028H410V1064H528V1087H540V1137H373V1087H349V1076H336V1052H361V1040H373V1016Z"/>
            <path fill="#f5f5f5" d="M577 1052H590V1040H612V1052H625V1064H638V1076H650V1087H674V1099H661V1137H540V1099H528V1087H577Z"/>
            <path fill="#e9e9e9" d="M650 1040H733V1052H768V1064H805V1076H816V1087H792V1112H781V1124H768V1137H661V1099H674V1087H650V1076H638V1052H650Z"/>
            <path fill="#f0f0f0" d="M805 1076H828V1064H840V1052H900V1137H768V1124H781V1112H792V1087H805Z"/>
            <path fill="none" d="M840 391V427H828V475H840V499H828V582H840V600H828V622"/>

            <path fill="#161616" d="M1560 20H1670V31H1705V66H1717V115H1729V139H1717V211H1696V223H1682V235H1670V247H1657V259H1634V271H1610V283H1597V247H1560Z"/>
            <path fill="#1e1e1e" d="M1560 247H1597V283H1610V332H1621V356H1633V368H1621V475H1610V487H1560Z"/>
            <path fill="#0f0f0f" d="M1705 31H1876V43H1885V79H1873V103H1861V115H1825V127H1790V115H1766V103H1753V91H1717V66H1705Z"/>
            <path fill="#0e0e0e" d="M1866 31H1957V43H1969V91H1981V115H1993V139H2005V151H2018V163H1969V151H1921V139H1861V103H1873V79H1885V43H1866Z"/>
            <path fill="#2a2a2a" d="M1717 91H1753V103H1766V115H1790V127H1825V115H1861V139H1921V151H1969V163H2018V151H2030V163H2053V175H2077V211H2102V247H2090V259H2077V283H2018V330H2005V320H1969V307H1957V295H1910V283H1873V307H1861V320H1838V307H1801V271H1790V259H1777V247H1766V223H1753V211H1717V139H1729V115H1717Z"/>
            <path fill="#2b2b2b" d="M1717 211H1753V223H1766V247H1777V259H1790V271H1801V307H1838V344H1849V356H1861V368H1873V391H1885V415H1897V427H1910V451H1897V475H1885V487H1873V499H1861V511H1801V499H1790V463H1753V475H1729V487H1717V475H1694V463H1682V451H1670V427H1621V368H1633V356H1621V332H1610V271H1634V259H1657V247H1670V235H1682V223H1696V211Z"/>
            <path fill="#454545" d="M2018 283H2077V259H2090V247H2125V259H2161V271H2175V451H2150V439H2125V427H2113V415H2077V403H2066V391H2053V380H2042V368H2030V356H2018V344H2005V330H2018Z"/>
            <path fill="#555" d="M1873 283H1910V295H1957V307H1969V320H2005V344H2018V356H2030V368H2042V380H1993V391H1981V403H1969V415H1957V427H1945V439H1933V475H1921V487H1897V499H1873V487H1885V475H1897V451H1910V427H1897V415H1885V391H1873V368H1861V356H1849V344H1838V320H1861V307H1873Z"/>
            <path fill="#606060" d="M1621 427H1670V451H1682V463H1694V475H1717V487H1729V475H1753V463H1790V499H1801V511H1861V499H1897V487H1910V535H1921V547H1910V559H1921V571H1910V597H1861V631H1777V620H1705V631H1694V655H1682V667H1657V680H1645V692H1560V487H1610V475H1621Z"/>
            <path fill="#626262" d="M1993 380H2053V391H2066V403H2077V415H2113V427H2125V439H2150V451H2175V667H2138V655H2113V643H2102V631H2090V620H2077V608H2018V583H1993V597H1933V608H1921V597H1910V571H1921V559H1910V547H1921V535H1910V487H1921V475H1933V439H1945V427H1957V415H1969V403H1981V391H1993Z"/>
            <path fill="#9f9f9f" d="M1705 620H1777V631H1825V643H1838V752H1849V764H1910V778H1670V799H1657V823H1645V884H1633V895H1621V921H1560V692H1645V680H1657V667H1682V655H1694V631H1705Z"/>
            <path fill="#a0a0a0" d="M1861 597H1921V608H1933V643H1945V669H1957V728H1945V740H1933V764H1849V752H1838V631H1861Z"/>
            <path fill="#a3a3a3" d="M1933 597H1993V583H2018V608H2077V620H2090V631H2102V643H2113V655H2138V667H2175V909H2150V897H2125V885H2113V873H2102V861H2090V849H2066V861H2053V873H2042V861H1981V873H1957V885H1921V849H1933V787H1945V764H1933V740H1945V728H1957V669H1945V643H1933Z"/>
            <path fill="#a8a8a8" d="M1670 778H1910V764H1945V787H1933V849H1921V909H1885V897H1861V909H1790V897H1633V885H1645V823H1657V799H1670Z"/>
            <path fill="#e0e0e0" d="M1633 897H1790V909H1861V897H1885V909H1921V933H1933V945H1945V957H1981V969H2029V957H2053V945H2077V969H2090V981H2102V993H2113V1087H2090V1099H2103V1137H1621V1112H1633V1087H1645V1023H1657V1008H1645V981H1633V945H1621V933H1610V921H1621V909H1633Z"/>
            <path fill="#d4d4d4" d="M1981 861H2042V873H2053V885H2066V909H2077V945H2053V957H2029V969H1981V957H1945V945H1933V933H1921V885H1957V873H1981Z"/>
            <path fill="#dadada" d="M2066 849H2090V861H2102V873H2113V885H2125V897H2150V909H2175V1016H2162V1028H2150V1040H2138V1052H2125V1064H2113V993H2102V981H2090V969H2077V909H2066V885H2053V861H2066Z"/>
            <path fill="#e3e3e3" d="M1560 921H1610V933H1621V945H1633V981H1645V1008H1657V1018H1645V1087H1633V1112H1621V1137H1560Z"/>
            <path fill="none" d="M1560 1052H1645"/>
          </g>
          <g transform="translate(44 244) scale(.33333)" fill="none" stroke="#5673a8" stroke-opacity=".8" stroke-width="3">
            <path d="M24 122H91L103 109H175L186 122H198L222 145H258L270 157H354L368 171H404L415 181H440L450 194H505M571 55V37H596V33M24 327H48M300 350H318L330 364H390L410 374L440 400H487L500 410L548 364H586L604 380L620 400H634L667 435V455L679 460V487L690 495V545L720 570L745 584L770 594H792L828 620L768 688H745L705 710H620L610 722H595L577 743"/>
            <path d="M300 465L378 400L402 388H420L440 400M450 403V445L420 478M606 385V355L628 335L650 322L673 310V302H697M661 507H679V523H690M816 194H835L847 206"/>
            <path d="M133 601H160L175 613V635L192 665V680L222 715V723H120M222 723H300L307 730M307 705V755L318 770V785L306 795L260 842L245 845L205 880H175L150 892L105 938H75L43 962H24M385 736H340L335 745H318M205 887L220 902H295L327 935M318 808H340"/>
            <path d="M565 892H600L610 878H680L695 866H705L712 878L725 866H805M835 802V830L823 840V860L811 868V925L799 940V1020L811 1040V1080L823 1095V1137M811 927H830M673 945L685 962H700L725 974H765L795 1000M24 1095H79L90 1108H110M185 1133H210L230 1113M528 1053L548 1072V1095L571 1119H583L607 1133M480 1095H510L523 1108H535M781 1084H811"/>
            <path d="M1645 93L1663 108V145L1676 158V180L1688 193H1700L1717 209L1730 193H1765L1770 205H1832L1845 193H1905L1921 215H1940L1963 242H1996M1724 209V230L1712 245V290L1736 325V385L1748 395V405L1760 421H1808L1850 465L1856 480L1880 500M1935 415L1915 435V470L1880 500L1855 530H1825L1805 543H1785L1772 530H1688L1640 483L1628 495V540L1640 550V565L1628 580V615L1607 637L1560 645"/>
            <path d="M1957 507H2012L2028 518L2045 530H2100L2130 555H2175M2138 364H2158L2172 374M1832 33V45M1927 33V45M1560 752L1590 760L1605 771H1910L1925 765M1910 759H1992L2000 771H2025L2037 783H2110L2132 805V820L2145 830V845L2172 868M1838 802L1855 785H1905L1945 765"/>
            <path d="M2053 933L2085 963H2100L2121 939H2175M2080 965L2030 1010H2012L1990 1036H1832L1820 1024H1785L1765 1048H1690L1675 1060H1650L1625 1045L1595 1020L1560 1010M1560 1090H1590L1605 1072L1640 1058"/>
          </g>
        </svg>
        <div class="vbar"><svg class="up"><use href="#chev"/></svg><i class="fill"></i><i class="thumb"></i><i class="fill two"></i><svg><use href="#chev"/></svg></div>
      </div>
      <div class="hbar">
        <button class="mini on" aria-label="数据视图"><svg><use href="#dataview"/></svg></button>
        <button class="mini" aria-label="布局视图"><svg><use href="#doc"/></svg></button>
        <i class="sep"></i>
        <button class="mini" aria-label="刷新"><svg><use href="#refresh"/></svg></button>
        <button class="mini" aria-label="暂停"><svg viewBox="0 0 16 16"><path d="M5 2v12M11 2v12" stroke="#2864a9" stroke-width="3"/></svg></button>
        <svg class="left"><use href="#chev"/></svg><i class="map-left"></i><i class="thumb"></i><i class="fill"></i><svg class="right"><use href="#chev"/></svg><i class="corner"></i>
      </div>
    </section>

    <aside class="toolbox">
      <div class="panel-title"><span>ArcToolbox</span><button aria-label="自动隐藏"><svg><use href="#pin"/></svg></button><button aria-label="关闭面板"><svg><use href="#boldclose"/></svg></button></div>
      <ul>
        <li class="root"><svg><use href="#toolroot"/></svg><span>ArcToolbox</span></li>
        <li><i class="tog plus"></i><svg><use href="#toolbox"/></svg><span>3D Analyst 工具</span></li>
        <li><i class="tog plus"></i><svg><use href="#toolbox"/></svg><span>Arc Hydro Tools</span></li>
        <li><i class="tog plus"></i><svg><use href="#toolbox"/></svg><span>ArcHydroPartialTerrainUpdate</span></li>
        <li class="hot"><i class="tog plus"></i><svg><use href="#toolbox"/></svg><span>Data Interoperability 工具</span></li>
        <li><i class="tog plus"></i><svg><use href="#toolbox"/></svg><span>Geostatistical Analyst 工具</span></li>
        <li><i class="tog plus"></i><svg><use href="#toolbox"/></svg><span>Network Analyst 工具</span></li>
        <li><i class="tog plus"></i><svg><use href="#toolbox"/></svg><span>Schematics 工具</span></li>
        <li><i class="tog plus"></i><svg><use href="#toolbox"/></svg><span>Spatial Analyst 工具</span></li>
        <li><i class="tog plus"></i><svg><use href="#toolbox"/></svg><span>Tracking Analyst 工具</span></li>
        <li><i class="tog plus"></i><svg><use href="#toolbox"/></svg><span>编辑工具</span></li>
        <li><i class="tog plus"></i><svg><use href="#toolbox"/></svg><span>地理编码工具</span></li>
        <li><i class="tog plus"></i><svg><use href="#toolbox"/></svg><span>多维工具</span></li>
        <li><i class="tog plus"></i><svg><use href="#toolbox"/></svg><span>分析工具</span></li>
        <li><i class="tog plus"></i><svg><use href="#toolbox"/></svg><span>服务器工具</span></li>
        <li><i class="tog plus"></i><svg><use href="#toolbox"/></svg><span>空间统计工具</span></li>
        <li><i class="tog plus"></i><svg><use href="#toolbox"/></svg><span>数据管理工具</span></li>
        <li><i class="tog plus"></i><svg><use href="#toolbox"/></svg><span>线性参考工具</span></li>
        <li><i class="tog plus"></i><svg><use href="#toolbox"/></svg><span>制图工具</span></li>
        <li><i class="tog plus"></i><svg><use href="#toolbox"/></svg><span>转换工具</span></li>
        <li><i class="tog plus"></i><svg><use href="#toolbox"/></svg><span>宗地结构工具</span></li>
      </ul>
    </aside>
    <div class="sidetabs">
      <button><svg><use href="#catalog"/></svg><span>目录</span></button>
      <button><svg><use href="#search"/></svg><span>搜索</span></button>
    </div>
  </main>

  <footer class="status">91.187&nbsp; 29.439 十进制度</footer>
  <div class="watermark">https://blog.csdn.net/weixin_43012724</div>

  <section class="dialog" role="dialog" aria-label="添加 XY 数据">
    <header><span>添加 XY 数据</span><button aria-label="关闭对话框"><svg><use href="#close"/></svg></button></header>
    <div class="dialog-body">
      <p class="intro">包含 X 和 Y 坐标的表可以图层形式添加到地图中</p>
      <label for="sheet">从地图中选择一个表或浏览到另一个表:</label>
      <div class="pick">
        <span class="combo classic"><select id="sheet"><option>Sheet1$</option></select><i class="arrow"><i class="caret"></i></i></span>
        <button class="btn browse" aria-label="浏览"><svg><use href="#open"/></svg></button>
      </div>
      <fieldset class="fields">
        <legend>指定 X、Y 和 Z 坐标字段:</legend>
        <label for="fx">X 字段(X):</label><span class="combo"><select id="fx"><option>x</option></select><svg><use href="#chev"/></svg></span>
        <label for="fy">Y 字段(Y):</label><span class="combo"><select id="fy"><option>y</option></select><svg><use href="#chev"/></svg></span>
        <label for="fz">Z 字段(Z):</label><span class="combo"><select id="fz"><option>&lt;无&gt;</option></select><svg><use href="#chev"/></svg></span>
      </fieldset>
      <fieldset class="crs">
        <legend>输入坐标的坐标系</legend>
        <label for="desc">描述:</label>
        <div class="descbox">
          <textarea id="desc" readonly>地理坐标系:
  Name: GCS_WGS_1984</textarea>
          <div class="dv"><svg class="up"><use href="#chev"/></svg><svg><use href="#chev"/></svg></div>
          <div class="dh"><svg class="left"><use href="#chev"/></svg><svg class="right"><use href="#chev"/></svg></div>
        </div>
        <div class="crs-foot"><label class="check"><input type="checkbox">显示详细信息(D)</label><button class="btn edit">编辑(E)...</button></div>
      </fieldset>
      <label class="check warn"><input type="checkbox" checked>结果图层的功能将会受到限制时向我发出警告(W)</label>
      <div class="actions"><a href="#about">关于添加 XY 数据</a><button class="btn ok">确定</button><button class="btn">取消</button></div>
    </div>
  </section>

  <svg class="callout" viewBox="0 0 456 296" aria-hidden="true"><path d="M0 0L444 281L448 278L455 293L438 291L441 286Z" fill="#f93e3a"/></svg>
</div>
</body>
</html>
```
FILE: styles.css
```css
* { box-sizing: border-box; }
body { margin: 0; font: 9px/14px "Open Sans", "Noto Sans CJK SC", sans-serif; color: #1b1b1b; background: #f0f0f0; }
button, select, input, textarea { font: inherit; color: inherit; margin: 0; padding: 0; }
button { border: 0; background: none; display: inline-flex; align-items: center; justify-content: center; white-space: nowrap; }
svg { display: block; flex: none; }
i { font-style: normal; flex: none; }
.defs { position: absolute; width: 0; height: 0; }

.app { position: relative; min-height: 100vh; height: 100vh; display: flex; flex-direction: column; overflow: hidden; border-top: 2px solid #70859e; border-left: 1px solid #70859e; border-bottom: 2px solid #8b8b8b; }

.titlebar { height: 22px; flex: none; display: flex; align-items: center; gap: 8px; background: #fff; padding-left: 5px; }
.app-icon { width: 12px; height: 12px; margin-right: -4px; }
.app-title { flex: 1; color: #8b8b8b; }
.win { width: 24px; height: 20px; color: #777; }
.win svg { width: 8px; height: 8px; }

.menubar { height: 18px; flex: none; display: flex; align-items: center; gap: 12px; padding-left: 8px; background: #f4f4f4; }

.bars { height: 19px; flex: none; display: flex; align-items: center; gap: 4px; background: #f7f7f7; }
.bar { height: 18px; display: flex; align-items: center; background: linear-gradient(#fcfcfc, #ececec); }
.second { border-bottom: 1px solid #8f8f8f; height: 20px; }
.grip { width: 2px; height: 12px; margin: 0 2px; background: repeating-linear-gradient(#aaa 0 1px, transparent 1px 3px); }
.sep { width: 1px; height: 12px; margin: 0 1px; background: #bdbdbd; }
.sep.clear { background: none; }
.more { width: 8px; height: 18px; background: linear-gradient(#efefef, #a2a2a2); position: relative; }
.more::after { content: ""; position: absolute; left: 2px; bottom: 3px; border: 2px solid transparent; border-top: 3px solid #111; border-bottom: 0; }
.tb { width: 16px; height: 16px; flex: none; color: #444; }
.tb svg { width: 12px; height: 12px; }
.tb.off { color: #b0b0b0; }
.tb.on { background: #d3e9fa; border: 1px solid #6eb2e8; }
.caret { display: inline-block; width: 4px; height: 3px; margin: 0 1px; border: 2px solid transparent; border-top: 3px solid #222; border-bottom: 0; }
.caret.dim { border-top-color: #aaa; }
.drop { gap: 1px; padding: 0 1px; }
.help { padding: 0 3px; }
.edit-menu { padding: 0 2px; }

.combo { display: flex; align-items: center; position: relative; background: #fff; border: 1px solid #9a9a9a; }
.combo select { appearance: none; flex: 1; min-width: 0; width: 100%; height: 100%; border: 0; background: none; padding: 0 12px 0 2px; outline: 0; }
.combo > svg { position: absolute; right: 2px; width: 8px; height: 8px; color: #555; pointer-events: none; }
.scale { width: 104px; height: 14px; margin: 0 4px 0 2px; font-family: "Liberation Mono", monospace; font-size: 8px; }
.percent { width: 43px; height: 13px; border-color: #ccc; color: #777; font-size: 8px; }

.work { flex: 1; min-height: 0; display: flex; }
.panel-title { height: 15px; flex: none; display: flex; align-items: center; gap: 4px; padding: 0 3px; background: linear-gradient(90deg, #bccde0, #d7e5f2); }
.panel-title span { flex: 1; }
.panel-title svg { width: 7px; height: 7px; }

.toc { width: 141px; flex: none; display: flex; flex-direction: column; border-right: 1px solid #9aa4b0; border-bottom: 1px solid #9aa4b0; margin-bottom: 1px; }
.toc-tools { height: 18px; flex: none; display: flex; align-items: center; padding-left: 2px; background: #f5f5f5; border-bottom: 1px solid #a8b0b8; }
.toc-tools .sep { margin: 0 2px; }
.toc-body { flex: 1; min-height: 0; display: flex; background: #fff; }
.tree { flex: 1; min-width: 0; overflow: hidden; padding: 1px 0 0; }
.row { height: 14px; display: flex; align-items: center; padding-left: 6px; white-space: nowrap; }
.row.l1 { padding-left: 19px; }
.row.l2 { padding-left: 32px; }
.row.l3 { padding-left: 45px; }
.row svg { width: 12px; height: 12px; margin: 0 3px 0 2px; }
.row input { appearance: none; width: 9px; height: 9px; margin: 0 5px 0 4px; border: 1px solid #333; background: #fff; display: grid; place-items: center; }
.row input:checked::after, .check input:checked::after { content: ""; width: 5px; height: 3px; margin-top: -2px; border-left: 1px solid #111; border-bottom: 1px solid #111; transform: rotate(-45deg); }
.picked { font-weight: 700; color: #fff; background: #0078d7; padding: 0 1px; margin-left: -1px; }
.tog { width: 7px; height: 7px; margin-right: 1px; border: 1px solid #b5b5b5; background: linear-gradient(#4c6bb0, #4c6bb0) center / 3px 1px no-repeat #fff; }
.tog.plus { background: linear-gradient(#4c6bb0, #4c6bb0) center / 3px 1px no-repeat, linear-gradient(#4c6bb0, #4c6bb0) center / 1px 3px no-repeat #fff; }
.row.sym { padding-left: 68px; }
.poly { width: 11px; height: 8px; border: 1px solid #9c8868; }
.poly.gold { border-color: #bb9650; }
.stroke { width: 11px; height: 1px; background: #6b8ac2; }
.row.val { padding-left: 72px; }
.row.cls { padding-left: 55px; gap: 2px; }
.cls i { width: 11px; height: 8px; border: 1px solid #777; }
.c-str { background: #241c1e; } .c1 { background: #12494e; } .c2 { background: #0011fb; } .c4 { background: #f81b12; }
.c8 { background: #22df0a; } .c16 { background: #f16bc4; } .c32 { background: #fdd277; } .c64 { background: #2ef0cc; } .c128 { background: #532d00; }
.cls .river { height: 1px; border: 0; background: #5aa2f5; }
.ramp { height: 57px; flex: none; display: grid; grid-template: 13px 14px 14px 14px / 10px 1fr; column-gap: 3px; padding-left: 55px; align-content: start; white-space: nowrap; }
.ramp.tall { height: 71px; }
.ramp .head { grid-column: 1 / 3; padding-left: 17px; }
.ramp i { grid-row: 2 / 4; margin: 1px 0 -1px; }
.ramp span:nth-child(4) { grid-row: 4; grid-column: 2; }
.gray { background: linear-gradient(#f5f5f5, #000); }
.navy { background: linear-gradient(#42508f, #5f92c8 55%, #fff); }
.sky { background: linear-gradient(#fff, #8fbdff 55%); }
.earth { background: linear-gradient(#ccc, #7a2a10 40%, #fff); }

.vbar { width: 12px; flex: none; display: flex; flex-direction: column; align-items: center; background: #f0f0f0; }
.hbar { height: 13px; flex: none; display: flex; align-items: center; background: #f0f0f0; }
.vbar svg, .hbar > svg { width: 9px; height: 9px; margin: 2px; }
.up { transform: rotate(180deg); }
.left { transform: rotate(90deg); }
.right { transform: rotate(-90deg); }
.fill { flex: 1; }
.corner { width: 12px; }
.toc-thumb { flex: 0 1 90%; width: 100%; background: #cdcdcd; margin-bottom: auto; }
.toc-hthumb { width: 58px; height: 11px; background: #cdcdcd; }

.mapview { flex: 1; min-width: 0; display: flex; flex-direction: column; margin: 0 3px 1px 2px; border-left: 2px solid #9a9a9a; border-bottom: 1px solid #d5d5d5; }
.mapmain { flex: 1; min-height: 0; display: flex; background: #fff; }
.mapmain .vbar { width: 13px; }
.map { flex: 1; min-width: 0; height: 100%; }
.thumb { width: 11px; height: 12px; background: #cdcdcd; }
.mapmain .fill { flex: 36 0 0; }
.mapmain .fill.two { flex: 65 0 0; }
.mini { width: 12px; height: 13px; color: #444; }
.mini svg { width: 8px; height: 8px; }
.mini.on { background: #cfe6fa; }
.hbar .sep { margin: 0 2px; }
.map-left { flex: 2.7 0 0; }

.toolbox { width: 212px; flex: none; display: flex; flex-direction: column; border: 1px solid #a5adb8; border-top: 0; background: #fff; margin-bottom: 2px; }
.toolbox ul { list-style: none; margin: 0; padding: 1px 0 0; }
.toolbox li { height: 14px; display: flex; align-items: center; padding-left: 6px; white-space: nowrap; }
.toolbox li svg { width: 12px; height: 12px; margin: 0 3px 0 2px; }
.toolbox li.root { padding-left: 1px; }
.hot span { background: #eee; }
.sidetabs { width: 10px; flex: none; overflow: hidden; display: flex; flex-direction: column; align-items: flex-start; gap: 2px; padding: 1px 0 0 1px; }
.sidetabs button { width: 16px; height: 36px; flex: none; flex-direction: column; border: 1px solid #aaa; border-radius: 3px; background: #f6f6f6; align-items: flex-start; }
.sidetabs svg { width: 11px; height: 11px; }
.sidetabs span { writing-mode: vertical-rl; }

.status { height: 14px; flex: none; padding: 1px 111px 0 0; text-align: right; }
.watermark { position: absolute; right: 9px; bottom: 5px; font-size: 15px; line-height: 22px; color: rgba(190, 190, 190, .5); }

.dialog { position: absolute; left: 471px; top: 333px; width: 247px; background: #f0f0f0; border: 1px solid #777; box-shadow: 0 2px 8px rgba(0, 0, 0, .45); font-size: 8px; line-height: 13px; }
.dialog header { height: 17px; display: flex; align-items: center; justify-content: space-between; background: #fff; padding: 0 6px 0 2px; }
.dialog header svg { width: 9px; height: 9px; }
.dialog-body { display: flex; flex-direction: column; padding: 4px 8px 5px; }
.intro { margin: 0 0 18px; }
.pick { display: flex; gap: 6px; margin: 4px 0 5px 2px; }
.classic { flex: 1; height: 15px; border: 2px solid #747474; border-right-width: 1px; border-bottom-width: 1px; }
.classic select { padding-left: 14px; }
.classic .arrow { width: 11px; height: 11px; position: absolute; right: 0; display: grid; place-items: center; background: #eee; border: 1px solid #aaa; pointer-events: none; }
.btn { height: 15px; background: #e1e1e1; border: 1px solid #adadad; }
.browse { width: 26px; }
.browse svg { width: 12px; height: 12px; }
fieldset { border: 1px solid #dcdcdc; margin: 0; min-width: 0; }
legend { padding: 0 3px; margin-left: -4px; }
.fields { display: grid; grid-template-columns: 51px 1fr; row-gap: 5px; padding: 5px 9px 6px 7px; align-items: center; }
.fields .combo { height: 15px; }
.crs { display: flex; flex-direction: column; padding: 4px 11px 8px 8px; margin-top: 4px; }
.descbox { display: grid; grid-template: 1fr 12px / 1fr 12px; height: 112px; border: 1px solid #888; margin-top: 1px; }
.descbox textarea { resize: none; border: 0; outline: 0; background: #f0f0f0; padding: 2px 3px; line-height: 9px; border-right: 1px solid #fff; border-bottom: 1px solid #fff; overflow: hidden; white-space: pre; }
.descbox svg { width: 8px; height: 8px; color: #999; }
.dv { display: flex; flex-direction: column; justify-content: space-between; align-items: center; padding: 4px 0; }
.dh { display: flex; justify-content: space-between; align-items: center; padding: 0 3px; }
.crs-foot { display: flex; justify-content: space-between; align-items: center; margin-top: 5px; }
.check { display: flex; align-items: center; gap: 2px; }
.check input { appearance: none; width: 9px; height: 9px; border: 1px solid #444; background: #fff; display: grid; place-items: center; }
.edit { width: 43px; height: 14px; }
.warn { margin-top: 4px; }
.actions { display: flex; align-items: flex-end; gap: 18px; margin-top: 11px; }
.actions a { flex: 1; color: #0000e0; align-self: flex-start; margin-top: -3px; }
.actions .btn { width: 52px; }
.actions .ok { border: 2px solid #2f83cc; }

.callout { position: absolute; left: 32px; top: 35px; width: 456px; height: 296px; pointer-events: none; }
```
